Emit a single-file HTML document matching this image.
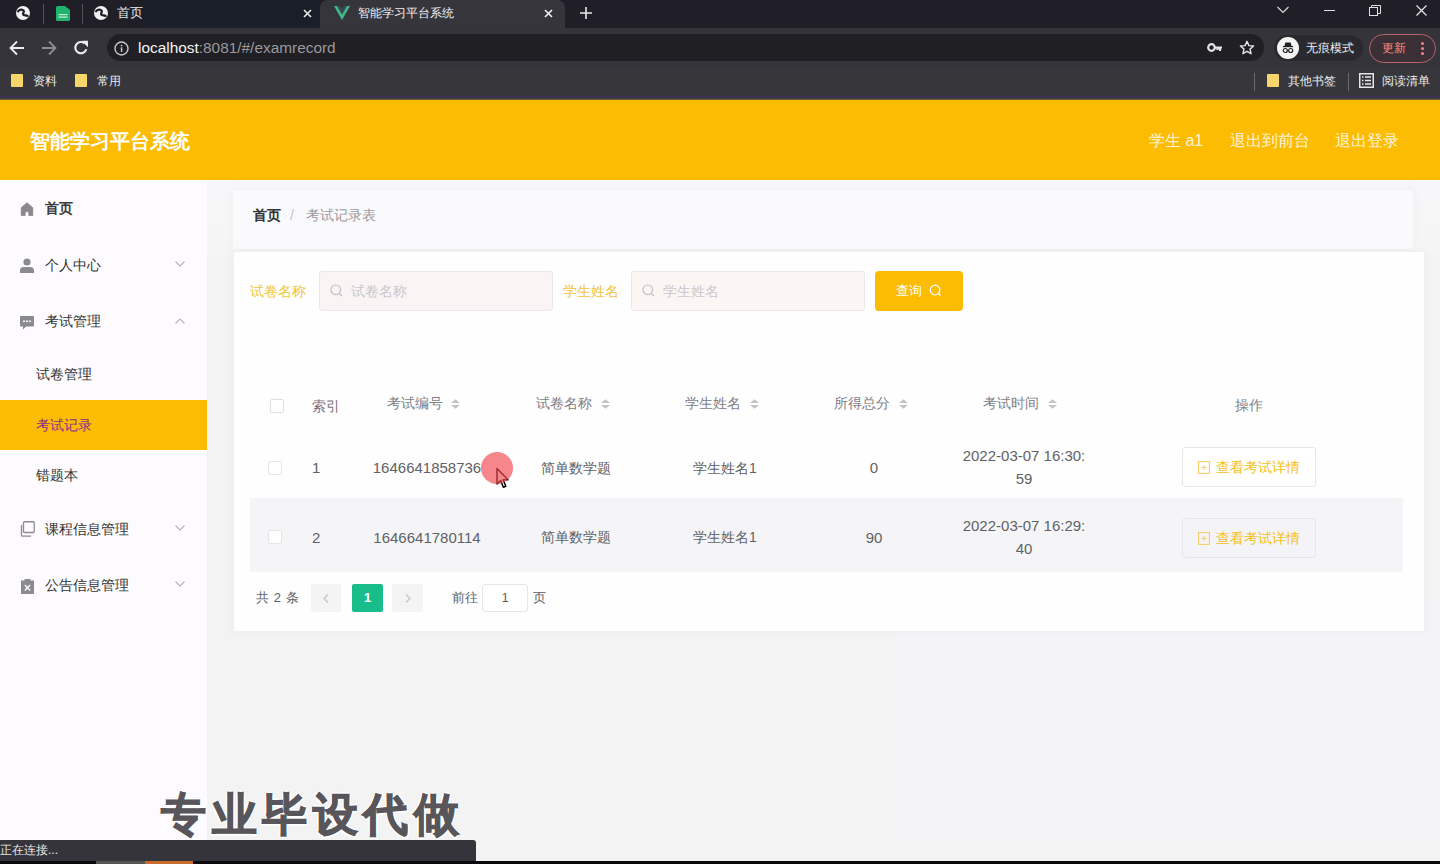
<!DOCTYPE html>
<html><head><meta charset="utf-8">
<style>
*{margin:0;padding:0;box-sizing:border-box}
html,body{width:1440px;height:864px;overflow:hidden;background:#f3f3f3;font-family:"Liberation Sans",sans-serif}
.a{position:absolute}
.t{position:absolute;white-space:nowrap;line-height:1}
/* chrome */
#tabbar{left:0;top:0;width:1440px;height:29px;background:#201f27}
#toolbar{left:0;top:28px;width:1440px;height:38px;background:#35343a}
#bmbar{left:0;top:66px;width:1440px;height:31px;background:#36363b}
#bmline{left:0;top:96px;width:1440px;height:4px;background:linear-gradient(180deg,#3c3450 0,#3c3450 2px,#46452e 3px,#8a7a20 4px)}
#header{left:0;top:100px;width:1440px;height:80px;background:#fcbc02}
#sidebar{left:0;top:180px;width:207px;height:660px;background:#fdfbfd}
</style></head><body>
<div class="a" id="tabbar"></div>
<div class="a" id="toolbar"></div>
<div class="a" id="bmbar"></div>
<div class="a" id="bmline"></div>
<div class="a" id="header"></div>
<div class="a" id="sidebar"></div>

<!-- TAB BAR -->
<div class="a" style="left:43px;top:4px;width:1px;height:20px;background:#55545a"></div>
<div class="a" style="left:82px;top:4px;width:1px;height:20px;background:#55545a"></div>
<svg class="a" style="left:15px;top:5px" width="16" height="16" viewBox="0 0 16 16"><circle cx="8" cy="8" r="7" fill="#f2f2f2"/><path d="M3.2 6.2 C4.5 4.2 7.5 4 8.6 5.6 C9.6 7 7.6 8.2 8.2 9.4 C8.8 10.6 11 10.2 12.6 11" stroke="#1f1e24" stroke-width="2.3" fill="none" stroke-linecap="round"/></svg>
<svg class="a" style="left:56px;top:6px" width="14" height="15" viewBox="0 0 14 15"><path d="M0 1.5 Q0 0 1.5 0 H9 L14 4 V13.5 Q14 15 12.5 15 H1.5 Q0 15 0 13.5Z" fill="#1fb36d"/><rect x="2.5" y="8" width="9" height="1.2" fill="#c8f0d8"/><rect x="2.5" y="10.5" width="9" height="1.2" fill="#c8f0d8"/></svg>
<div class="a" style="left:135px;top:0;width:185px;height:26px;background:linear-gradient(90deg,#1f1e24,#1a1e28 12px,#1a1e28)"></div>
<svg class="a" style="left:93px;top:5px" width="16" height="16" viewBox="0 0 16 16"><circle cx="8" cy="8" r="7" fill="#f2f2f2"/><path d="M3.2 6.2 C4.5 4.2 7.5 4 8.6 5.6 C9.6 7 7.6 8.2 8.2 9.4 C8.8 10.6 11 10.2 12.6 11" stroke="#1f1e24" stroke-width="2.3" fill="none" stroke-linecap="round"/></svg>
<div class="t" style="left:117px;top:6px;font-size:13px;color:#e8e8ea">首页</div>
<svg class="a" style="left:303px;top:9px" width="9" height="9" viewBox="0 0 9 9"><path d="M1 1L8 8M8 1L1 8" stroke="#e8e8e8" stroke-width="1.6"/></svg>
<div class="a" style="left:320px;top:0;width:245px;height:29px;background:#36353c;border-radius:8px 8px 0 0"></div>
<svg class="a" style="left:334px;top:6px" width="16" height="14" viewBox="0 0 16 14"><path d="M0 0H3.2L8 8.3L12.8 0H16L8 14Z" fill="#41b883"/><path d="M3.2 0H5.8L8 3.8L10.2 0H12.8L8 8.3Z" fill="#35495e"/></svg>
<div class="t" style="left:358px;top:7px;font-size:12px;color:#f0f0f2">智能学习平台系统</div>
<svg class="a" style="left:544px;top:9px" width="9" height="9" viewBox="0 0 9 9"><path d="M1 1L8 8M8 1L1 8" stroke="#f0f0f0" stroke-width="1.6"/></svg>
<svg class="a" style="left:580px;top:7px" width="12" height="12" viewBox="0 0 12 12"><path d="M6 0V12M0 6H12" stroke="#e8e8e8" stroke-width="1.6"/></svg>
<svg class="a" style="left:1277px;top:6px" width="12" height="8" viewBox="0 0 12 8"><path d="M0.5 1L6 6.5L11.5 1" stroke="#d8d8d8" stroke-width="1.2" fill="none"/></svg>
<div class="a" style="left:1324px;top:10px;width:11px;height:1px;background:#e0e0e0"></div>
<svg class="a" style="left:1369px;top:5px" width="12" height="11" viewBox="0 0 12 11"><rect x="0.5" y="2.5" width="8" height="8" stroke="#e0e0e0" fill="none"/><path d="M2.5 2.5V0.5H11.5V8.5H8.5" stroke="#e0e0e0" fill="none"/></svg>
<svg class="a" style="left:1416px;top:5px" width="11" height="11" viewBox="0 0 11 11"><path d="M0.5 0.5L10.5 10.5M10.5 0.5L0.5 10.5" stroke="#e8e8e8" stroke-width="1.2"/></svg>
<!-- TOOLBAR -->
<svg class="a" style="left:9px;top:40px" width="16" height="16" viewBox="0 0 16 16"><path d="M15 8H2M8 1.5L1.5 8L8 14.5" stroke="#ececec" stroke-width="1.8" fill="none"/></svg>
<svg class="a" style="left:41px;top:40px" width="16" height="16" viewBox="0 0 16 16"><path d="M1 8H14M8 1.5L14.5 8L8 14.5" stroke="#8e8d92" stroke-width="1.8" fill="none"/></svg>
<svg class="a" style="left:73px;top:40px" width="16" height="16" viewBox="0 0 16 16"><path d="M13.3 9.2A5.6 5.6 0 1 1 11.6 3.4" stroke="#ececec" stroke-width="2.1" fill="none"/><path d="M8.6 0.8H15V7.2Z" fill="#ececec"/></svg>
<div class="a" style="left:107px;top:34px;width:1157px;height:27px;background:#1f1f24;border-radius:13.5px"></div>
<svg class="a" style="left:114px;top:41px" width="15" height="15" viewBox="0 0 15 15"><circle cx="7.5" cy="7.5" r="6.5" stroke="#c8c8cc" stroke-width="1.4" fill="none"/><rect x="6.8" y="6.3" width="1.5" height="4.6" fill="#c8c8cc"/><rect x="6.8" y="3.8" width="1.5" height="1.5" fill="#c8c8cc"/></svg>
<div class="t" style="left:138px;top:40px;font-size:15.4px;color:#f4f4f4">localhost<span style="color:#9a999e">:8081/#/examrecord</span></div>
<svg class="a" style="left:1207px;top:42px" width="16" height="11" viewBox="0 0 16 11"><circle cx="4.5" cy="5.5" r="3.3" stroke="#e6e6e6" stroke-width="2.2" fill="none"/><path d="M7.5 5.5H15M13 5.5V9M10.5 5.5V8" stroke="#e6e6e6" stroke-width="2.2" fill="none"/></svg>
<svg class="a" style="left:1239px;top:40px" width="16" height="16" viewBox="0 0 16 16"><path d="M8 1.3L9.9 5.6L14.6 6L11 9.1L12.1 13.7L8 11.3L3.9 13.7L5 9.1L1.4 6L6.1 5.6Z" stroke="#e6e6e6" stroke-width="1.4" fill="none" stroke-linejoin="round"/></svg>
<div class="a" style="left:1274px;top:35px;width:89px;height:26px;background:#2a292f;border-radius:13px"></div>
<svg class="a" style="left:1277px;top:37px" width="22" height="22" viewBox="0 0 22 22"><circle cx="11" cy="11" r="11" fill="#f4f4f4"/><path d="M6 9.3H16M7.5 9L8.3 5.5H13.7L14.5 9Z" fill="#222"/><circle cx="8.3" cy="13.5" r="2" stroke="#222" stroke-width="1.2" fill="none"/><circle cx="13.7" cy="13.5" r="2" stroke="#222" stroke-width="1.2" fill="none"/><path d="M10.3 13.5H11.7" stroke="#222" stroke-width="1.1"/><rect x="6" y="9" width="10" height="1.2" fill="#222"/></svg>
<div class="t" style="left:1306px;top:42px;font-size:12px;color:#f0f0f0">无痕模式</div>
<div class="a" style="left:1369px;top:34px;width:67px;height:29px;border:1.5px solid #b8646c;border-radius:15px;background:#3a3036"></div>
<div class="t" style="left:1382px;top:42px;font-size:12px;color:#f48b80">更新</div>
<div class="a" style="left:1421px;top:42px;width:3px;height:3px;border-radius:2px;background:#f08a80"></div>
<div class="a" style="left:1421px;top:47px;width:3px;height:3px;border-radius:2px;background:#f08a80"></div>
<div class="a" style="left:1421px;top:52px;width:3px;height:3px;border-radius:2px;background:#f08a80"></div>
<!-- BOOKMARKS -->
<div class="a" style="left:11px;top:74px;width:12px;height:13px;background:#f7d56a;border-radius:1px"></div>
<div class="t" style="left:33px;top:75px;font-size:12px;color:#ececec">资料</div>
<div class="a" style="left:75px;top:74px;width:12px;height:13px;background:#f7d56a;border-radius:1px"></div>
<div class="t" style="left:97px;top:75px;font-size:12px;color:#ececec">常用</div>
<div class="a" style="left:1254px;top:73px;width:1px;height:18px;background:#6a696e"></div>
<div class="a" style="left:1267px;top:74px;width:12px;height:13px;background:#f7d56a;border-radius:1px"></div>
<div class="t" style="left:1288px;top:75px;font-size:12px;color:#ececec">其他书签</div>
<div class="a" style="left:1348px;top:73px;width:1px;height:18px;background:#6a696e"></div>
<svg class="a" style="left:1359px;top:73px" width="15" height="15" viewBox="0 0 15 15"><rect x="0.75" y="0.75" width="13.5" height="13.5" stroke="#e6e6e6" stroke-width="1.5" fill="none"/><path d="M3 4H4.5M6 4H12M3 7.5H4.5M6 7.5H12M3 11H4.5M6 11H12" stroke="#e6e6e6" stroke-width="1.3"/></svg>
<div class="t" style="left:1382px;top:75px;font-size:12px;color:#ececec">阅读清单</div>


<!-- HEADER -->
<div class="t" style="left:30px;top:131px;font-size:20px;font-weight:bold;color:#fff">智能学习平台系统</div>
<div class="t" style="left:1149px;top:133px;font-size:16px;color:#fdf3d8">学生 a1</div>
<div class="t" style="left:1230px;top:133px;font-size:16px;color:#fdf3d8">退出到前台</div>
<div class="t" style="left:1335px;top:133px;font-size:16px;color:#fdf3d8">退出登录</div>
<!-- SIDEBAR -->
<svg class="a" style="left:20px;top:202px" width="14" height="14" viewBox="0 0 14 14"><path d="M7 0.8Q5 2.5 1.2 5.8V13.5H5.2V9.8H8.8V13.5H12.8V5.8Q9 2.5 7 0.8Z" fill="#8a888e" stroke="#8a888e" stroke-width="0.8" stroke-linejoin="round"/></svg>
<div class="t" style="left:45px;top:201px;font-size:14px;font-weight:bold;color:#3a3a3c">首页</div>
<svg class="a" style="left:20px;top:258px" width="14" height="15" viewBox="0 0 14 15"><circle cx="7" cy="4" r="3.6" fill="#8a8a8f"/><path d="M0 15V12.5Q0 9 4 9H10Q14 9 14 12.5V15Z" fill="#8a8a8f"/></svg>
<div class="t" style="left:45px;top:258px;font-size:14px;color:#333">个人中心</div>
<svg class="a" style="left:175px;top:261px" width="10" height="6" viewBox="0 0 10 6"><path d="M0.5 0.5L5 5L9.5 0.5" stroke="#b4b4b8" stroke-width="1.2" fill="none"/></svg>
<svg class="a" style="left:20px;top:316px" width="14" height="14" viewBox="0 0 14 14"><path d="M0 1Q0 0 1 0H13Q14 0 14 1V9.5Q14 10.5 13 10.5H6L3 13.5V10.5H1Q0 10.5 0 9.5Z" fill="#8a8a8f"/><circle cx="4" cy="5.3" r="1" fill="#fff"/><circle cx="7" cy="5.3" r="1" fill="#fff"/><circle cx="10" cy="5.3" r="1" fill="#fff"/></svg>
<div class="t" style="left:45px;top:314px;font-size:14px;color:#333">考试管理</div>
<svg class="a" style="left:175px;top:318px" width="10" height="6" viewBox="0 0 10 6"><path d="M0.5 5.5L5 1L9.5 5.5" stroke="#b4b4b8" stroke-width="1.2" fill="none"/></svg>
<div class="t" style="left:36px;top:367px;font-size:14px;color:#333">试卷管理</div>
<div class="a" style="left:0;top:400px;width:207px;height:50px;background:#fcbc02"></div>
<div class="t" style="left:36px;top:418px;font-size:14px;color:#8a2f8c">考试记录</div>
<div class="t" style="left:36px;top:468px;font-size:14px;color:#333">错题本</div>
<svg class="a" style="left:19px;top:521px" width="16" height="16" viewBox="0 0 16 16"><rect x="4.5" y="0.75" width="10.75" height="10.75" rx="1" stroke="#8a8a8f" stroke-width="1.3" fill="none"/><path d="M2.5 4V14.2Q2.5 15.2 3.5 15.2H12" stroke="#8a8a8f" stroke-width="1.3" fill="none"/></svg>
<div class="t" style="left:45px;top:522px;font-size:14px;color:#333">课程信息管理</div>
<svg class="a" style="left:175px;top:525px" width="10" height="6" viewBox="0 0 10 6"><path d="M0.5 0.5L5 5L9.5 0.5" stroke="#b4b4b8" stroke-width="1.2" fill="none"/></svg>
<svg class="a" style="left:21px;top:578px" width="13" height="16" viewBox="0 0 13 16"><path d="M0 2.5H3.5V1H9.5V2.5H13V16H0Z" fill="#8a8a8f"/><path d="M3.8 7L9.2 12.5M9.2 7L3.8 12.5" stroke="#fff" stroke-width="1.3"/></svg>
<div class="t" style="left:45px;top:578px;font-size:14px;color:#333">公告信息管理</div>
<svg class="a" style="left:175px;top:581px" width="10" height="6" viewBox="0 0 10 6"><path d="M0.5 0.5L5 5L9.5 0.5" stroke="#b4b4b8" stroke-width="1.2" fill="none"/></svg>
<!-- CONTENT -->
<div class="a" style="left:207px;top:180px;width:1233px;height:75px;background:linear-gradient(180deg,#f7f6f8,#f5f5f6)"></div>
<div class="a" style="left:233px;top:190px;width:1180px;height:59px;background:#faf9fb;box-shadow:0 0 6px 1px rgba(240,239,242,0.9)"></div>
<div class="t" style="left:253px;top:208px;font-size:14px;font-weight:bold;color:#303133">首页</div>
<div class="t" style="left:290px;top:208px;font-size:14px;color:#c0c4cc">/</div>
<div class="t" style="left:306px;top:208px;font-size:14px;color:#9a9aa0">考试记录表</div>
<div class="a" style="left:895px;top:600px;width:545px;height:240px;background:#f4f4f7"></div>
<div class="a" style="left:234px;top:252px;width:1190px;height:379px;background:#fefefe;box-shadow:0 0 6px 1px rgba(236,236,238,0.8)"></div>
<div class="t" style="left:250px;top:284px;font-size:14px;color:#f2c53a">试卷名称</div>
<div class="a" style="left:319px;top:271px;width:234px;height:40px;background:#faf4f5;border:1px solid #ebe7eb;border-radius:3px"></div>
<svg class="a" style="left:330px;top:284px" width="13" height="13" viewBox="0 0 13 13"><circle cx="5.8" cy="5.8" r="4.8" stroke="#c0c0c4" stroke-width="1.2" fill="none"/><path d="M9.3 9.3L12 12" stroke="#c0c0c4" stroke-width="1.2"/></svg>
<div class="t" style="left:351px;top:284px;font-size:14px;color:#cbc7cb">试卷名称</div>
<div class="t" style="left:563px;top:284px;font-size:14px;color:#f2c53a">学生姓名</div>
<div class="a" style="left:631px;top:271px;width:234px;height:40px;background:#fbf5f4;border:1px solid #ebe7eb;border-radius:3px"></div>
<svg class="a" style="left:642px;top:284px" width="13" height="13" viewBox="0 0 13 13"><circle cx="5.8" cy="5.8" r="4.8" stroke="#c0c0c4" stroke-width="1.2" fill="none"/><path d="M9.3 9.3L12 12" stroke="#c0c0c4" stroke-width="1.2"/></svg>
<div class="t" style="left:663px;top:284px;font-size:14px;color:#cbc7cb">学生姓名</div>
<div class="a" style="left:875px;top:271px;width:88px;height:40px;background:#fcbc02;border-radius:4px"></div>
<div class="t" style="left:896px;top:284px;font-size:13px;color:#fff">查询</div>
<svg class="a" style="left:929px;top:284px" width="13" height="13" viewBox="0 0 13 13"><circle cx="6" cy="6" r="4.8" stroke="#fff" stroke-width="1.3" fill="none"/><path d="M9.5 9.5L11.5 11.5" stroke="#fff" stroke-width="1.3"/></svg>
<div class="a" style="left:270px;top:399px;width:14px;height:14px;border:1px solid #dcdfe6;border-radius:2px;background:#fff"></div>
<div class="t" style="left:312px;top:399px;font-size:14px;font-weight:500;color:#7f6f76">索引</div>
<div class="t" style="left:387px;top:396px;font-size:14px;font-weight:500;color:#808086">考试编号</div>
<svg class="a" style="left:450px;top:399px" width="11" height="10" viewBox="0 0 11 10"><path d="M5.5 0.3L10 4H1Z" fill="#c4c4c8"/><path d="M5.5 9.7L10 6H1Z" fill="#c4c4c8"/></svg>
<div class="t" style="left:536px;top:396px;font-size:14px;font-weight:500;color:#808086">试卷名称</div>
<svg class="a" style="left:600px;top:399px" width="11" height="10" viewBox="0 0 11 10"><path d="M5.5 0.3L10 4H1Z" fill="#c4c4c8"/><path d="M5.5 9.7L10 6H1Z" fill="#c4c4c8"/></svg>
<div class="t" style="left:685px;top:396px;font-size:14px;font-weight:500;color:#808086">学生姓名</div>
<svg class="a" style="left:749px;top:399px" width="11" height="10" viewBox="0 0 11 10"><path d="M5.5 0.3L10 4H1Z" fill="#c4c4c8"/><path d="M5.5 9.7L10 6H1Z" fill="#c4c4c8"/></svg>
<div class="t" style="left:834px;top:396px;font-size:14px;font-weight:500;color:#808086">所得总分</div>
<svg class="a" style="left:898px;top:399px" width="11" height="10" viewBox="0 0 11 10"><path d="M5.5 0.3L10 4H1Z" fill="#c4c4c8"/><path d="M5.5 9.7L10 6H1Z" fill="#c4c4c8"/></svg>
<div class="t" style="left:983px;top:396px;font-size:14px;font-weight:500;color:#808086">考试时间</div>
<svg class="a" style="left:1047px;top:399px" width="11" height="10" viewBox="0 0 11 10"><path d="M5.5 0.3L10 4H1Z" fill="#c4c4c8"/><path d="M5.5 9.7L10 6H1Z" fill="#c4c4c8"/></svg>
<div class="t" style="left:1235px;top:398px;font-size:14px;font-weight:500;color:#808086">操作</div>
<div class="a" style="left:250px;top:498px;width:1153px;height:74px;background:#f5f5f7"></div>
<div class="a" style="left:268px;top:461px;width:14px;height:14px;border:1px solid #e4e6ea;border-radius:2px;background:#fff"></div>
<div class="t" style="left:312px;top:460px;font-size:15px;color:#606266">1</div>
<div class="t" style="left:327px;top:460px;width:200px;text-align:center;font-size:15px;color:#606266">1646641858736</div>
<div class="t" style="left:476px;top:461px;width:200px;text-align:center;font-size:14px;color:#606266">简单数学题</div>
<div class="t" style="left:625px;top:461px;width:200px;text-align:center;font-size:14px;color:#606266">学生姓名1</div>
<div class="t" style="left:774px;top:460px;width:200px;text-align:center;font-size:15px;color:#606266">0</div>
<div class="t" style="left:924px;top:448px;width:200px;text-align:center;font-size:15px;color:#606266">2022-03-07 16:30:</div>
<div class="t" style="left:924px;top:471px;width:200px;text-align:center;font-size:15px;color:#606266">59</div>
<div class="a" style="left:1182px;top:447px;width:134px;height:40px;border:1px solid #e8e6ea;border-radius:3px;background:#fff"></div>
<svg class="a" style="left:1198px;top:461px" width="12" height="13" viewBox="0 0 12 13"><rect x="0.6" y="0.6" width="10.8" height="11.8" stroke="#f7cf6a" stroke-width="1.1" fill="none"/><path d="M3.5 6.5H8.5M6 4V9" stroke="#f7cf6a" stroke-width="1"/></svg>
<div class="t" style="left:1216px;top:460px;font-size:14px;color:#f3bf22">查看考试详情</div>
<div class="a" style="left:268px;top:530px;width:14px;height:14px;border:1px solid #e4e6ea;border-radius:2px;background:#fff"></div>
<div class="t" style="left:312px;top:530px;font-size:15px;color:#606266">2</div>
<div class="t" style="left:327px;top:530px;width:200px;text-align:center;font-size:15px;color:#606266">1646641780114</div>
<div class="t" style="left:476px;top:530px;width:200px;text-align:center;font-size:14px;color:#606266">简单数学题</div>
<div class="t" style="left:625px;top:530px;width:200px;text-align:center;font-size:14px;color:#606266">学生姓名1</div>
<div class="t" style="left:774px;top:530px;width:200px;text-align:center;font-size:15px;color:#606266">90</div>
<div class="t" style="left:924px;top:518px;width:200px;text-align:center;font-size:15px;color:#606266">2022-03-07 16:29:</div>
<div class="t" style="left:924px;top:541px;width:200px;text-align:center;font-size:15px;color:#606266">40</div>
<div class="a" style="left:1182px;top:518px;width:134px;height:40px;border:1px solid #e8e6ea;border-radius:3px;background:#f4f4f8"></div>
<svg class="a" style="left:1198px;top:532px" width="12" height="13" viewBox="0 0 12 13"><rect x="0.6" y="0.6" width="10.8" height="11.8" stroke="#f7cf6a" stroke-width="1.1" fill="none"/><path d="M3.5 6.5H8.5M6 4V9" stroke="#f7cf6a" stroke-width="1"/></svg>
<div class="t" style="left:1216px;top:531px;font-size:14px;color:#f3bf22">查看考试详情</div>
<div class="t" style="left:256px;top:591px;font-size:13px;letter-spacing:0.6px;color:#606266">共 2 条</div>
<div class="a" style="left:311px;top:584px;width:30px;height:28px;background:#f4f4f5;border-radius:2px"></div>
<svg class="a" style="left:323px;top:594px" width="6" height="9" viewBox="0 0 6 9"><path d="M5 0.5L1 4.5L5 8.5" stroke="#c0c4cc" stroke-width="1.2" fill="none"/></svg>
<div class="a" style="left:352px;top:584px;width:31px;height:28px;background:#19bd8a;border-radius:2px"></div>
<div class="t" style="left:352px;top:591px;width:31px;text-align:center;font-size:13px;font-weight:bold;color:#fff">1</div>
<div class="a" style="left:392px;top:584px;width:31px;height:28px;background:#f4f4f5;border-radius:2px"></div>
<svg class="a" style="left:405px;top:594px" width="6" height="9" viewBox="0 0 6 9"><path d="M1 0.5L5 4.5L1 8.5" stroke="#c0c4cc" stroke-width="1.2" fill="none"/></svg>
<div class="t" style="left:452px;top:591px;font-size:13px;color:#606266">前往</div>
<div class="a" style="left:482px;top:584px;width:46px;height:28px;border:1px solid #e4e6ea;border-radius:3px;background:#fff"></div>
<div class="t" style="left:482px;top:591px;width:46px;text-align:center;font-size:13px;color:#606266">1</div>
<div class="t" style="left:533px;top:591px;font-size:13px;color:#606266">页</div>
<svg class="a" style="left:495px;top:467px" width="15" height="23" viewBox="0 0 15 23"><path d="M2 1.5V17L5.6 13.6L8.4 20.2L10.8 19.2L8.1 12.8H13Z" fill="#fff" stroke="#000" stroke-width="1.5" stroke-linejoin="round"/></svg>
<div class="a" style="left:481px;top:452px;width:32px;height:32px;border-radius:50%;background:rgba(240,72,80,0.66)"></div>
<div class="t" style="left:161px;top:792px;font-size:45px;letter-spacing:5.5px;font-weight:900;color:#58565a;-webkit-text-stroke:1.1px #58565a;text-shadow:2px 0 0 #fff,-2px 0 0 #fff,0 2px 0 #fff,0 -2px 0 #fff,1.5px 1.5px 0 #fff,-1.5px -1.5px 0 #fff,1.5px -1.5px 0 #fff,-1.5px 1.5px 0 #fff,0 0 3px #bbb">专业毕设代做</div>
<div class="a" style="left:0;top:840px;width:476px;height:21px;background:#35343a;border-radius:0 3px 0 0"></div>
<div class="t" style="left:0;top:844px;font-size:12px;color:#e8e8e8">正在连接...</div>
<div class="a" style="left:0;top:861px;width:1440px;height:3px;background:#0a0a0c"></div>
<div class="a" style="left:96px;top:861px;width:49px;height:3px;background:#555"></div>
<div class="a" style="left:145px;top:861px;width:48px;height:3px;background:#c86a2a"></div>
</body></html>
